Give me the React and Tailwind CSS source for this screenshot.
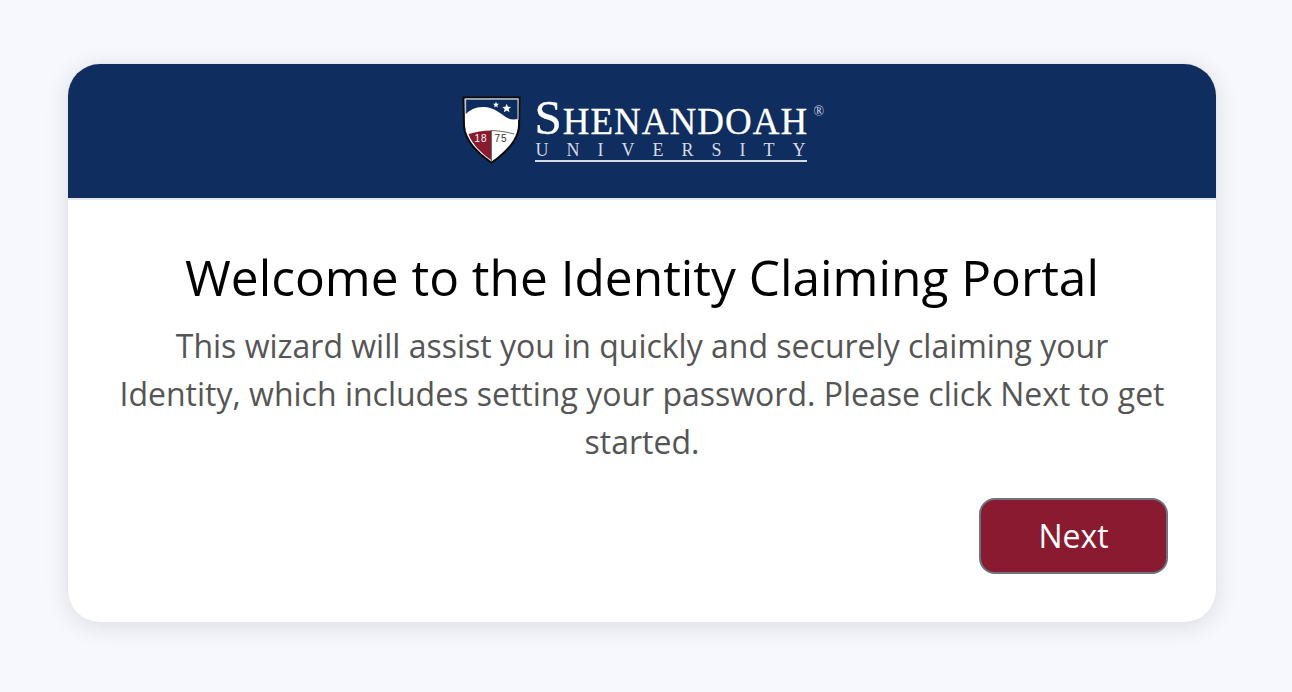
function Shield() {
  return (
    <svg width="59" height="68" viewBox="0 0 59 68" className="shrink-0 mt-[1.5px]">
      {/* outer black outline */}
      <path d="M0.5 0.5 H58.5 L58 30 C57 45 44 58 29.5 68 C15 58 2 45 1 30 Z" fill="#0a0a0a" />
      <path d="M2.5 2.5 H56.5 L56 30 C55 44 43 56 29.5 65.5 C16 56 4 44 3 30 Z" fill="#ffffff" />
      {/* sky */}
      <path d="M3.5 3 H56 V23 C51 24 47 23.5 43 20.5 C37 16 31 11.5 22 11 C14 10.5 8 14 3.8 18 Z" fill="#0d2c5e" />
      <path d="M3 2.5 H56.5 V24 H55.4 V3.8 H4.2 V18 H3 Z" fill="#b9c2cf" />
      {/* stars */}
      <path d="M34 5.6 l.8 2.1 2.3.1 -1.8 1.4 .6 2.2 -1.9-1.2 -1.9 1.2 .6-2.2 -1.8-1.4 2.3-.1 z" fill="#fff" />
      <path d="M44.7 7.8 l1.2 3 3.3.2 -2.5 2.1 .8 3.2 -2.8-1.8 -2.8 1.8 .8-3.2 -2.5-2.1 3.3-.2 z" fill="#fff" />
      {/* maroon lower left */}
      <path d="M6.5 38 C13 36 21 34.7 29 34.5 V64 C19 57 10 48 6.5 38 Z" fill="#8a1a30" />
      <path d="M29 34.5 C37 34.7 45 36 52 38" fill="none" stroke="#444" strokeWidth="0.8" />
      <path d="M29.5 34.5 V65" stroke="#444" strokeWidth="0.8" />
      <text x="19" y="46" textAnchor="middle" fontSize="10" fill="#fff" letterSpacing="1" fontFamily="'Liberation Sans', sans-serif">18</text>
      <text x="39" y="46" textAnchor="middle" fontSize="10" fill="#333" letterSpacing="1" fontFamily="'Liberation Sans', sans-serif">75</text>
    </svg>
  );
}

function Logo() {
  return (
    <div className="flex items-start gap-[14px] text-white font-['Liberation_Serif',serif] mt-[-3px]">
      <Shield />
      <div className="relative w-[288px] h-[68px]">
        <div className="text-[49px] leading-[38px] w-[272px] mt-[4px] whitespace-nowrap tracking-[1px] [-webkit-text-stroke:0.3px_white]">
          <span>S</span>
          <span className="text-[37px]">HENANDOAH</span>
        </div>
        <span className="absolute left-[279px] top-[10px] text-[14px] leading-none text-[#d5dbe6]">®</span>
        <div className="flex justify-between w-[272px] text-[18px] leading-[16px] text-[#d5dbe6] mt-[1.5px] px-[1px]">
          {"UNIVERSITY".split("").map((c, i) => (
            <span key={i}>{c}</span>
          ))}
        </div>
        <div className="w-[272px] h-[2px] bg-[#d5dbe6] mt-[1.5px]" />
      </div>
    </div>
  );
}

export default function App() {
  return (
    <div className="min-h-screen bg-[#f7f8fd] pt-[64px] px-[68px] font-['Open_Sans',sans-serif]">
      <div className="w-[1148px] h-[558px] bg-white rounded-[32px] overflow-hidden ring-1 ring-[#e8e8ea] shadow-[0_4px_24px_rgba(15,23,42,0.12)]">
        <div className="h-[134px] bg-[#0f2d5e] flex items-center justify-center border-b-2 border-[#e5e7eb] box-content">
          <Logo />
        </div>
        <div className="px-[48px] pt-[46px] text-center">
          <h1 className="text-[49.6px] leading-[62px] text-black">
            Welcome to the Identity Claiming Portal
          </h1>
          <p className="text-[32px] leading-[48px] text-[#555555] mt-[14px]">
            This wizard will assist you in quickly and securely claiming your
            Identity, which includes setting your password. Please click Next
            to get started.
          </p>
          <div className="flex justify-end mt-[32px]">
            <button className="w-[189px] h-[76px] rounded-[16px] bg-[#8a1a30] border-2 border-[#6b7280] text-white text-[32px]">
              Next
            </button>
          </div>
        </div>
      </div>
    </div>
  );
}
